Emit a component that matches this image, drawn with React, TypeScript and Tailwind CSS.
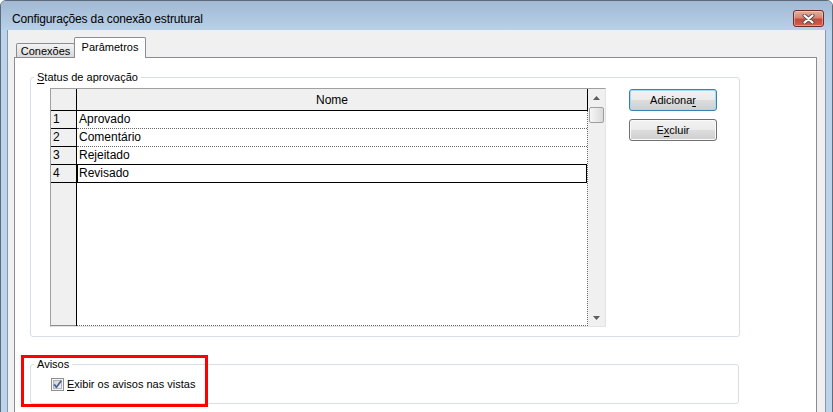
import React from "react";

const rows = [
  { n: 1, t: "Aprovado", sel: false },
  { n: 2, t: "Comentário", sel: false },
  { n: 3, t: "Rejeitado", sel: false },
  { n: 4, t: "Revisado", sel: true },
];

function CloseButton() {
  return (
    <div className="mt-[9px] mr-[8px] w-[31px] h-[17px] rounded-[3px] border border-[#6e2c26] bg-[linear-gradient(to_bottom,#e9ad9e_0%,#d98473_45%,#c44a3b_55%,#cc6350_100%)] flex items-center justify-center shadow-[inset_0_0_0_1px_rgba(255,220,210,0.45)]">
      <svg width="13" height="10" viewBox="0 0 13 10">
        <path d="M2.5 1.5 L10.5 8.5 M10.5 1.5 L2.5 8.5" stroke="#5a4a48" strokeWidth="4" strokeLinecap="round" fill="none" />
        <path d="M2.5 1.5 L10.5 8.5 M10.5 1.5 L2.5 8.5" stroke="#ffffff" strokeWidth="2.2" strokeLinecap="round" fill="none" />
      </svg>
    </div>
  );
}

function Checkbox() {
  return (
    <svg width="13" height="13" viewBox="0 0 13 13" className="shrink-0">
      <defs>
        <linearGradient id="cbg" x1="0" y1="0" x2="1" y2="1">
          <stop offset="0" stopColor="#cfd2d6" />
          <stop offset="1" stopColor="#f4f4f4" />
        </linearGradient>
      </defs>
      <rect x="0.5" y="0.5" width="12" height="12" fill="#f4f4f4" stroke="#8e8f8f" />
      <rect x="2.5" y="2.5" width="8" height="8" fill="url(#cbg)" stroke="#b2b6bb" />
      <path d="M3.2 6.4 L5.4 9.2 L10.2 2.8" stroke="#4a5f94" strokeWidth="1.7" fill="none" strokeLinejoin="round" />
    </svg>
  );
}

function Button({ children, focused }: { children: React.ReactNode; focused?: boolean }) {
  return (
    <div
      className={
        focused
          ? "w-[88px] h-[22px] rounded-[3px] border border-[#3c7fb1] shadow-[inset_0_0_0_1px_#9fdcf7] bg-[linear-gradient(to_bottom,#f2f2f2_0%,#ebebeb_50%,#dddddd_50%,#cfcfcf_100%)] flex items-center justify-center text-[11px] leading-[13px]"
          : "w-[88px] h-[22px] rounded-[3px] border border-[#707070] shadow-[inset_0_0_0_1px_#fafafa] bg-[linear-gradient(to_bottom,#f2f2f2_0%,#ebebeb_50%,#dddddd_50%,#cfcfcf_100%)] flex items-center justify-center text-[11px] leading-[13px]"
      }
    >
      {children}
    </div>
  );
}

function Grid() {
  return (
    <div className="flex w-[556px] h-[239px] shrink-0 border border-[#a0a0a0] border-r-[#e3e3e3] border-b-[#e3e3e3] text-[12px]">
      <div className="w-[26px] flex flex-col bg-[#f0f0f0] border-r border-black">
        <div className="h-[22px] shrink-0 border-b border-black" />
        {rows.map((r) => (
          <div key={r.n} className="h-[18px] shrink-0 border-b border-black pl-[2px] leading-[17px]">
            {r.n}
          </div>
        ))}
        <div className="flex-1 border-b border-[#8c8c8c]" />
      </div>
      <div className="w-[511px] flex flex-col">
        <div className="h-[22px] shrink-0 bg-[#f0f0f0] border-b border-r border-black flex items-center justify-center leading-[20px]">
          Nome
        </div>
        <div className="flex-1 flex flex-col bg-white border-r border-b border-dotted border-[#666666]">
          {rows.map((r) =>
            r.sel ? (
              <div key={r.n} className="-mt-px h-[19px] shrink-0 border border-black pl-[1px] leading-[17px]">
                {r.t}
              </div>
            ) : (
              <div key={r.n} className="h-[18px] shrink-0 border-b border-dotted border-[#666666] pl-[2px] leading-[17px]">
                {r.t}
              </div>
            )
          )}
        </div>
      </div>
      <div className="w-[17px] flex flex-col bg-[#f0f0f0]">
        <div className="h-[17px] shrink-0 flex items-center justify-center">
          <svg width="7" height="4" viewBox="0 0 7 4">
            <path d="M3.5 0 L7 4 L0 4 Z" fill="#5c5c5c" />
          </svg>
        </div>
        <div className="mt-[1px] ml-[1px] w-[15px] h-[16px] shrink-0 rounded-[2px] border border-[#9f9f9f] bg-[linear-gradient(to_right,#f6f6f6,#e8e8e8_50%,#d9d9d9)]" />
        <div className="flex-1" />
        <div className="h-[17px] shrink-0 flex items-center justify-center">
          <svg width="7" height="4" viewBox="0 0 7 4">
            <path d="M0 0 L7 0 L3.5 4 Z" fill="#5c5c5c" />
          </svg>
        </div>
      </div>
    </div>
  );
}

export default function App() {
  return (
    <div className="relative w-[833px] h-[412px] overflow-hidden bg-white text-black font-['Liberation_Sans',Arial,sans-serif]">
      <div className="w-[833px] rounded-t-[6px] border border-[#5d6b7a] bg-[#bcd3eb]">
        <div className="h-[29px] flex items-start justify-between rounded-t-[5px] bg-[linear-gradient(to_bottom,#a2b9d3,#b9d0e9)]">
          <div className="pl-[11px] pt-[11px] text-[12px] leading-[14px] tracking-[-0.15px]">
            Configurações da conexão estrutural
          </div>
          <CloseButton />
        </div>
        <div className="px-[6px]">
          <div className="bg-[#f0f0f0] border-x border-[#8797a8] pl-[6px] pr-[8px] pt-[7px]">
            <div className="flex items-end pl-[2px] text-[11px]">
              <div className="h-[14px] w-[59px] flex items-center justify-center border border-b-0 border-[#898c95] rounded-t-[2px] bg-[linear-gradient(to_bottom,#f3f3f3,#e6e6e6_50%,#dadada)] leading-[12px]">
                Conexões
              </div>
              <div className="relative z-10 -ml-px -mb-px h-[21px] w-[72px] flex items-center justify-center pb-[3px] bg-white border border-b-0 border-[#898c95] rounded-t-[2px] leading-[12px]">
                Parâmetros
              </div>
            </div>
            <div className="bg-white border border-[#898c95] pt-[12px] pl-[15px] pb-[20px]">
              <fieldset className="w-[710px] border border-[#d5dfe5] rounded-[3px] p-0 m-0">
                <legend className="ml-[3px] px-[3px] text-[11px] leading-[14px]">
                  <span className="underline underline-offset-[2px]">S</span>tatus de aprovação
                </legend>
                <div className="flex items-start pt-[4px] pl-[19px] pb-[9px]">
                  <Grid />
                  <div className="ml-[23px] mt-[1px] flex flex-col gap-[8px]">
                    <Button focused>
                      <span>
                        Adiciona<span className="underline underline-offset-[2px]">r</span>
                      </span>
                    </Button>
                    <Button>
                      <span>
                        E<span className="underline underline-offset-[2px]">x</span>cluir
                      </span>
                    </Button>
                  </div>
                </div>
              </fieldset>
              <fieldset className="mt-[20px] w-[709px] border border-[#d5dfe5] rounded-[3px] p-0 m-0">
                <legend className="ml-[3px] px-[3px] text-[11px] leading-[14px]">Avisos</legend>
                <div className="pl-[20px] pb-[11px]">
                  <div className="mt-[6px] h-[15px] flex items-center gap-[3px] text-[11px] leading-[13px]">
                    <Checkbox />
                    <span>
                      <span className="underline underline-offset-[2px]">E</span>xibir os avisos nas vistas
                    </span>
                  </div>
                </div>
              </fieldset>
            </div>
          </div>
        </div>
      </div>
      <div className="absolute left-[21px] top-[355px] w-[187px] h-[52px] border-[3px] border-[#ff0000]" />
    </div>
  );
}
